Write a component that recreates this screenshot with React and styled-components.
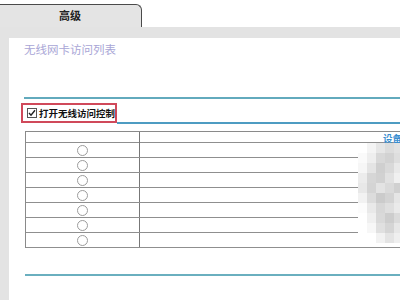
import React from "react";
import styled, { createGlobalStyle } from "styled-components";

const GlobalStyle = createGlobalStyle`
  html, body {
    margin: 0;
    padding: 0;
    background: #ffffff;
    width: 400px;
    height: 300px;
    overflow: hidden;
    font-family: "Liberation Sans", "Noto Sans CJK SC", sans-serif;
  }
`;

const TabBar = styled.div`
  height: 27px;
  display: flex;
  align-items: flex-end;
  background: #ffffff;
`;

const Tab = styled.div`
  box-sizing: border-box;
  width: 144px;
  height: 23px;
  margin-left: -2px;
  background: #e4e4e4;
  border: 1px solid #4a4a4a;
  border-bottom: none;
  border-top-right-radius: 6px;
  display: flex;
  justify-content: center;
  padding-top: 3px;
  font-family: "Noto Sans CJK SC", sans-serif;
  font-weight: bold;
  font-size: 11px;
  line-height: 14px;
  color: #222;
`;

const Frame = styled.div`
  background: #e3e3e3;
  padding: 11px 0 0 9px;
  height: 262px;
`;

const Panel = styled.div`
  position: relative;
  background: #ffffff;
  height: 100%;
  padding-left: 15px;
  overflow: hidden;
`;

const Title = styled.div`
  margin-top: 4px;
  height: 14px;
  font-family: "Noto Sans CJK SC", sans-serif;
  font-size: 11.5px;
  line-height: 14px;
  color: #a9a6d6;
`;

const Rule = styled.div`
  height: 2px;
  background: ${(p) => p.color || "#62aabd"};
  margin-top: ${(p) => p.top || 0}px;
  margin-left: ${(p) => p.indent || 0}px;
`;

const CheckRow = styled.div`
  display: flex;
  margin-top: 4px;
  margin-left: -3px;
`;

const CheckBox = styled.label`
  box-sizing: border-box;
  height: 20px;
  width: 96px;
  border: 2px solid #d0495a;
  display: flex;
  align-items: center;
  gap: 2px;
  padding-left: 4px;
  font-family: "Noto Sans CJK SC", sans-serif;
  font-weight: bold;
  font-size: 9.5px;
  color: #111;
  white-space: nowrap;
`;

const Tick = styled.span`
  box-sizing: border-box;
  width: 10px;
  height: 10px;
  border: 1px solid #555;
  background: #fff;
  display: flex;
  align-items: center;
  justify-content: center;
`;

const Filler = styled.div`
  flex: 1;
  border-bottom: 2px solid #4d9cc2;
  margin-bottom: -1px;
`;

const Table = styled.div`
  margin-top: 8px;
  margin-left: 1px;
  width: 420px;
  border-top: 1px solid #8a8a8a;
  border-left: 1px solid #8a8a8a;
`;

const Row = styled.div`
  display: grid;
  grid-template-columns: 114px 1fr;
  height: ${(p) => p.h}px;
  border-bottom: 1px solid #8f8f8f;
  box-sizing: border-box;
`;

const Cell = styled.div`
  display: flex;
  align-items: center;
  justify-content: ${(p) => p.align || "center"};
  border-right: ${(p) => (p.first ? "1px solid #777" : "none")};
  padding-left: ${(p) => p.pad || 0}px;
`;

const Radio = styled.span`
  box-sizing: border-box;
  width: 11px;
  height: 11px;
  border-radius: 50%;
  border: 1px solid #9c9c9c;
  background: #fff;
`;

const HeadText = styled.span`
  font-family: "Noto Sans CJK SC", sans-serif;
  font-weight: bold;
  font-size: 9.5px;
  color: #3b8fd0;
  margin-top: -1px;
  white-space: nowrap;
`;

const Mosaic = styled.div`
  position: absolute;
  left: 349px;
  top: 105px;
  display: grid;
  grid-template-columns: repeat(5, 9px);
  grid-auto-rows: 10px;
`;

const Block = styled.div`
  background: ${(p) => p.c};
`;

const mosaic = [
  "#ffffff", "#f4f4f4", "#e6e6e6", "#dcdcdc", "#e2e2e2",
  "#fafafa", "#eeeeee", "#d8d8d8", "#d2d2d2", "#dedede",
  "#f6f6f6", "#e4e4e4", "#cfcfcf", "#d9d9d9", "#e9e9e9",
  "#ececec", "#d6d6d6", "#d1d1d1", "#e1e1e1", "#f0f0f0",
  "#e8e8e8", "#d4d4d4", "#e3e3e3", "#dadada", "#d0d0d0",
  "#f2f2f2", "#dcdcdc", "#cbcbcb", "#d3d3d3", "#e5e5e5",
  "#fcfcfc", "#e9e9e9", "#d7d7d7", "#dfdfdf", "#eaeaea",
  "#ffffff", "#f0f0f0", "#d9d9d9", "#cdcdcd", "#dbdbdb",
  "#ffffff", "#f7f7f7", "#e0e0e0", "#d5d5d5", "#e7e7e7",
  "#ffffff", "#ffffff", "#f2f2f2", "#e4e4e4", "#efefef",
];

const rows = [0, 1, 2, 3, 4, 5, 6];

export default function App() {
  return (
    <>
      <GlobalStyle />
      <TabBar>
        <Tab>高级</Tab>
      </TabBar>
      <Frame>
        <Panel>
          <Title>无线网卡访问列表</Title>
          <Rule top={41} />
          <CheckRow>
            <CheckBox>
              <Tick>
                <svg width="8" height="8" viewBox="0 0 8 8">
                  <path d="M1 4 L3 6.2 L7 1.2" fill="none" stroke="#222" strokeWidth="1.4" />
                </svg>
              </Tick>
              打开无线访问控制
            </CheckBox>
            <Filler />
          </CheckRow>
          <Table>
            <Row h={11}>
              <Cell first />
              <Cell align="flex-start" pad={243}>
                <HeadText>设备</HeadText>
              </Cell>
            </Row>
            {rows.map((r) => (
              <Row key={r} h={15}>
                <Cell first>
                  <Radio />
                </Cell>
                <Cell />
              </Row>
            ))}
          </Table>
          <Rule top={26} indent={1} color="#6aafbf" />
          <Mosaic>
            {mosaic.map((c, i) => (
              <Block key={i} c={c} />
            ))}
          </Mosaic>
        </Panel>
      </Frame>
    </>
  );
}
